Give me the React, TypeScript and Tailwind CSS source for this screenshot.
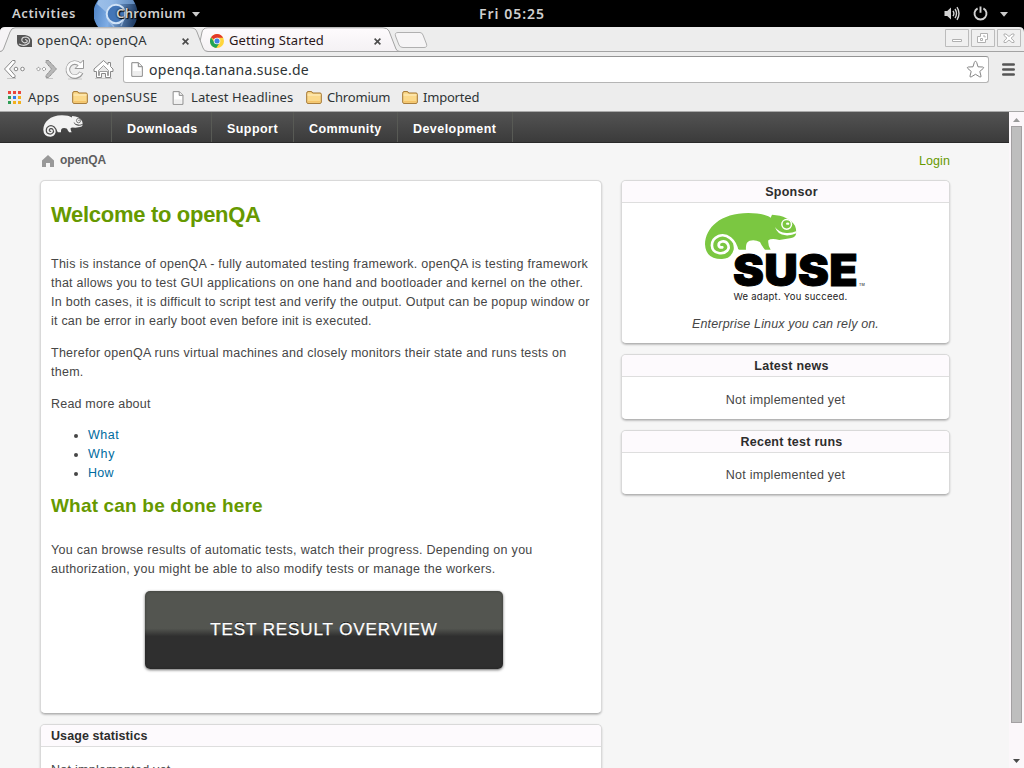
import type { ReactNode } from "react";

const UI = "font-['Noto_Sans','Open_Sans',sans-serif]";

function Chameleon({ className, body, cut, viewBox }: { className: string; body: string; cut: string; viewBox: string }) {
  return (
    <svg className={className} viewBox={viewBox} preserveAspectRatio="none">
      <path
        fill={body}
        d="M45 118 C46 68 92 24 175 24 C207 24 229 30 242 38 L246 29 C280 31 304 43 315 62 Q320 74 318 88 Q315 98 300 100 L268 105 Q244 99 235 106 Q233 120 242 134 L225 134 Q214 121 210 111 Q195 103 179 107 Q166 111 168 134 L147 134 Q136 128 126 108 Q133 120 131 134 Q124 161 96 162 Q47 163 45 118Z"
      />
      <path
        fill="none"
        stroke={cut}
        strokeWidth="8"
        strokeLinecap="round"
        d="M142 139 C136 104 110 84 86 93 C58 105 60 140 86 144 C108 148 122 131 113 117 C105 104 85 109 86 121 Q88 129 97 127"
      />
      <path fill={cut} d="M255 66 Q266 83 289 84 Q306 85 320 78 L319 85 Q305 92 287 91 Q262 89 255 66Z" />
      <circle cx="290" cy="58" r="14.5" fill="none" stroke={cut} strokeWidth="4.500" />
      <ellipse cx="293" cy="56" rx="5" ry="3.500" fill={cut} />
    </svg>
  );
}

function Chrome({ className }: { className: string }) {
  return (
    <svg className={className} viewBox="0 0 14 14">
      <circle cx="7" cy="7" r="7" fill="#ffd53c" />
      <path d="M7 7 1 3.4A7 7 0 0 1 13.1 3.7H7Z" fill="#e2372c" />
      <path d="M1 3.4A7 7 0 0 0 6.2 14L9.2 9.5 5 9Z" fill="#22a455" />
      <circle cx="7" cy="7" r="3.3" fill="#f4f4f4" />
      <circle cx="7" cy="7" r="2.5" fill="#3f82e4" />
    </svg>
  );
}

function Page({ className }: { className: string }) {
  return (
    <svg className={className} viewBox="0 0 12 15">
      <path d="M.8.7H7.5L11.3 4.5V14.3H.8Z" fill="#fff" stroke="#858585" />
      <path d="M7.3.8V4.7H11.2" fill="#eee" stroke="#858585" />
      <path d="M2 9H10V13H2Z" fill="#eee" />
    </svg>
  );
}

function Folder() {
  return (
    <svg className="mb-px h-[13px] w-4 shrink-0" viewBox="0 0 16 13">
      <path d="M.7 11V2.2Q.7.6 2 .6H5Q6.3.6 6.6 2H14Q15.3 2 15.3 3.2V11Q15.3 12.4 14 12.4H2Q.7 12.4.7 11Z" fill="#fbd98b" stroke="#a2742f" />
      <path d="M1.5 4H14.5" stroke="#fff0c5" />
      <path d="M1.6 10H14.4V11.5H1.6Z" fill="#f5c468" />
    </svg>
  );
}

function CloseX() {
  return (
    <svg className="mt-px h-[7px] w-[7px]" viewBox="0 0 7 7">
      <path d="M.6.6 6.4 6.4M6.4.6.6 6.4" stroke="#4c4c4c" strokeWidth="1.6" />
    </svg>
  );
}

function TopBar() {
  return (
    <div className={`relative flex h-[27px] items-center overflow-hidden bg-black font-semibold text-[#cfcfcf] ${UI}`}>
      <span className="ml-3 w-[82px] pt-px text-[13px] tracking-[0.6px]">Activities</span>
      <svg className="h-[27px] w-[44px]" viewBox="0 0 44 27">
        <defs>
          <linearGradient id="ball" x2="1" y2=".2">
            <stop stopColor="#477cc0" />
            <stop offset=".45" stopColor="#80aee5" />
            <stop offset="1" stopColor="#24426b" />
          </linearGradient>
          <linearGradient id="shine" x2="1">
            <stop stopColor="#b4d1f2" />
            <stop offset="1" stopColor="#6d9bd2" />
          </linearGradient>
        </defs>
        <circle cx="21.5" cy="13.5" r="22" fill="url(#ball)" />
        <path d="M22 4H41Q38-6 22-9Q6-7 3 4L12 12Q14 4 22 4Z" fill="url(#shine)" opacity=".75" />
        <circle cx="22" cy="14" r="9.3" fill="#4376b7" stroke="#d1e3f7" strokeWidth="2" />
        <path d="M14 20 20 27M31 16 27 26" stroke="#b0ccee" strokeWidth="1.5" opacity=".6" />
      </svg>
      <span className="-ml-[22px] w-[76px] pt-px text-[13px] tracking-[0.35px] [text-shadow:0_0_2px_#000,1px_1px_1px_#000]">Chromium</span>
      <svg className="mt-px h-[5px] w-2" viewBox="0 0 8 5"><path d="M0 0H8L4 4.800Z" fill="#ccc" /></svg>
      <span className="ml-[279px] pb-px text-[14px] tracking-[1px]">Fri 05:25</span>
      <svg className="ml-auto h-[15px] w-4" viewBox="0 0 16 15">
        <path d="M.5 5H3.2L7 1.4V13.6L3.2 10H.5Z" fill="#d2d2d2" />
        <path d="M9 4.8Q10.8 7.5 9 10.2M11 3Q14 7.5 11 12M13 1.2Q17 7.5 13 13.8" fill="none" stroke="#d2d2d2" strokeWidth="1.4" />
      </svg>
      <svg className="ml-[13px] h-[15px] w-[15px]" viewBox="0 0 15 15">
        <path d="M4.6 2.3A6 6 0 1 0 10.4 2.3M7.5.4V6.7" fill="none" stroke="#d2d2d2" strokeWidth="1.9" />
      </svg>
      <svg className="mt-px mr-4 ml-[12px] h-[5px] w-2" viewBox="0 0 8 5"><path d="M0 0H8L4 4.800Z" fill="#ccc" /></svg>
    </div>
  );
}

function TabStrip() {
  return (
    <div className={`relative h-[25px] bg-black text-[13px] text-[#2e3436] ${UI}`}>
      <svg className="absolute inset-0 h-[25px] w-[1024px]" viewBox="0 0 1024 25">
        <defs>
          <linearGradient id="tab2" x2="0" y2="1">
            <stop stopColor="#fefbfd" />
            <stop offset="1" stopColor="#f4f1f4" />
          </linearGradient>
        </defs>
        <path d="M0 25V5Q0 0 5 0H1019Q1024 0 1024 5V25Z" fill="#ededed" />
        <path d="M0 24.5H1024" stroke="#a3a3a3" />
        <path d="M0 24Q2 24 3 22L10 4Q11 .8 14 .8H5Q0 .8 0 5Z" fill="#f6f4f6" />
        <path d="M198 24.5 202 5Q203 .8 208 .8H383Q387.500 .8 389 4L396 22Q397 24.500 400 24.500Z" fill="url(#tab2)" stroke="#a3a3a3" />
        <path d="M0 24.500Q2.500 24.500 3.500 22L10 5Q11.500 .8 15 .8H191Q195.500 .8 197 5L203 21Q204 24.500 208 24.500V25H0Z" fill="#ededed" />
        <path d="M0 24.500Q2.500 24.500 3.500 22L10 5Q11.500 .8 15 .8H191Q195.500 .8 197 5L203 21Q204 24.500 208 24.500" fill="none" stroke="#a3a3a3" />
        <path d="M398 5.500H420Q422 5.500 423 8L426.500 17Q427.500 20.500 424 20.500H403Q400 20.500 399 18L395.500 9Q394.500 5.500 398 5.500Z" fill="#f6f5f6" stroke="#b0b0b0" />
      </svg>
      <div className="relative flex h-[27px] items-center">
        <svg className="ml-[17px] h-[14px] w-[15px]" viewBox="0 0 15 14">
          <path d="M0 1H8Q14 2 15 6V13H4Q0 12 0 8Z" fill="#555" />
          <path d="M2 10Q8 13 12 9Q14 4 9 3Q4 3 5 7Q7 10 10 8Q11 6 8 5.500" fill="none" stroke="#d8d8d8" strokeWidth="1.200" />
        </svg>
        <span className="ml-[5px] w-[145px] pt-px whitespace-nowrap tracking-[0.3px]">openQA: openQA</span>
        <CloseX />
        <Chrome className="ml-[21px] h-[14px] w-[14px]" />
        <span className="ml-[5px] w-[145px] pt-px whitespace-nowrap tracking-[0.1px] text-[#2a1719]">Getting Started</span>
        <CloseX />
        <div className="mr-[3px] mb-[5px] ml-auto flex gap-[2px]">
          {[
            <path key="a" d="M7.500 10.500H16.500V12.500H7.500Z" fill="#fff" stroke="#b0b0b0" />,
            <path key="b" d="M9.500 4.500H16.500V10.500H14.500V13.500H6.500V7.500H9.500ZM9.500 9.500H11.500V11.500H9.500ZM12 7H14V8.500" fill="#fff" stroke="#b0b0b0" />,
            <path key="c" d="M7 5H9L12 7.500 15 5H17V6.500L14 9.200 17 12V13.500H15L12 11 9 13.500H7V12L10 9.200 7 6.500Z" fill="#fff" stroke="#b0b0b0" />,
          ].map((icon, i) => (
            <svg key={i} className="h-[18px] w-6" viewBox="0 0 24 18">
              <path d="M.5.5H23.500V17.500H.5Z" fill="#f0f0f0" stroke="#bcbcbc" />
              {icon}
            </svg>
          ))}
        </div>
      </div>
    </div>
  );
}

function Toolbar() {
  return (
    <div className={`flex h-[34px] items-center bg-[#ededed] text-[#2e3436] ${UI}`}>
      <svg className="h-[34px] w-[123px] shrink-0" viewBox="0 0 123 34">
        <path d="M7 26.500H16M46 26.500H53M68 27H82M95 26.500H112" stroke="#c8c8c8" />
        <g fill="#fff" stroke="#888" strokeWidth="1">
          <path d="M12.500 8.500 4.500 17 12.500 25.500H15V23.500L9.500 17 15 10.500V8.500Z" />
          <circle cx="16" cy="17" r="1.800" />
          <circle cx="22.500" cy="17" r="1.800" />
          <path d="M48.500 8.500 56.500 17 48.500 25.500H46V23.500L51.500 17 46 10.500V8.500Z" fill="#b8b8b8" strokeDasharray="1.500 .5" />
          <circle cx="38.500" cy="17" r="1.600" strokeDasharray="1.500 .5" />
          <circle cx="44" cy="17" r="1.600" strokeDasharray="1.500 .5" />
          <path d="M103.500 8.500 94 17V19.500H96.500V25.500H101.500V21.500H105.500V25.500H110.500V19.500H113V17L110.500 14.500V10.500H108V12.500Z" />
        </g>
        <path d="M79.500 12.500A7 7 0 1 0 81.300 20.500" fill="none" stroke="#999" strokeWidth="4.500" />
        <path d="M83.500 8V16.500H75Z" fill="#fff" stroke="#999" />
        <path d="M80 12.800A7 7 0 1 0 80.900 20.800" fill="none" stroke="#fafafa" strokeWidth="2.800" />
        <path d="M98.500 18.500 103.500 13.500 108.500 18.500V23.500H107.500V19.500H99.500V23.500H98.500Z" fill="#e7e7e7" stroke="#888" strokeWidth=".8" />
      </svg>
      <div className="flex h-[27px] w-[866px] items-center rounded-[3px] border border-[#b5b5b5] border-t-[#939393] bg-white">
        <Page className="ml-[7px] h-[15px] w-3" />
        <span className="ml-[6px] text-[14px] tracking-[0.3px]">openqa.tanana.suse.de</span>
        <svg className="mr-[3px] ml-auto h-[19px] w-[19px]" viewBox="0 0 19 19">
          <path d="M9.500 1.300Q10.300 1.300 10.700 2.500L12 6.800 16.700 7Q18.400 7.300 17.200 8.500L13.800 11.400 15 16Q15.200 17.500 13.800 16.900L9.500 14.300 5.200 16.900Q3.800 17.500 4 16L5.200 11.400 1.800 8.500Q.6 7.300 2.300 7L7 6.800 8.300 2.500Q8.700 1.300 9.500 1.300Z" fill="#fff" stroke="#858585" />
        </svg>
      </div>
      <svg className="ml-[13px] h-[13px] w-[13px]" viewBox="0 0 13 13">
        <path d="M1.300 1.500H11.700M1.300 6.500H11.700M1.300 11.500H11.700" stroke="#555" strokeWidth="2.600" strokeLinecap="round" />
      </svg>
    </div>
  );
}

function Bookmarks() {
  const colors = ["#e9453a", "#e9453a", "#e9453a", "#2f9e55", "#2f7de9", "#f2b01e", "#2f9e55", "#f2b01e", "#f2b01e"];
  return (
    <div className={`flex h-[26px] items-center border-b border-[#a9a9a9] bg-[#ededed] pb-px text-[13px] whitespace-nowrap text-[#2e3436] ${UI}`}>
      <svg className="mb-[2px] ml-2 h-[13px] w-[13px]" viewBox="0 0 13 13">
        {colors.map((c, i) => (
          <rect key={i} x={(i % 3) * 5} y={Math.floor(i / 3) * 5} width="3" height="3" fill={c} />
        ))}
      </svg>
      <span className="ml-[7px] w-[44px] tracking-[0.2px]">Apps</span>
      <Folder />
      <span className="ml-[5px] w-[79px] tracking-[0.3px]">openSUSE</span>
      <Page className="h-[14px] w-3" />
      <span className="ml-[7px] w-[115px] tracking-[0.08px]">Latest Headlines</span>
      <Folder />
      <span className="ml-[5px] w-[75px] tracking-[-0.2px]">Chromium</span>
      <Folder />
      <span className="ml-[5px] tracking-[-0.2px]">Imported</span>
    </div>
  );
}

function Card({ title, center, className = "", children }: { title?: string; center?: boolean; className?: string; children: ReactNode }) {
  return (
    <section className={`overflow-hidden rounded-[5px] border border-[#d9d9d9] border-b-[#b5b5b5] bg-white shadow-[0_1px_2px_rgba(0,0,0,0.22)] ${center ? "text-center" : ""} ${className}`}>
      {title && (
        <h3 className={`h-[22px] border-b border-[#dedede] bg-[#fdfafd] text-[12.5px] leading-[23px] font-bold text-[#2d2d2d] ${center ? "pl-3 tracking-[0.26px]" : "pl-[10px] tracking-[0.08px]"}`}>{title}</h3>
      )}
      {children}
    </section>
  );
}

function SiteNav() {
  return (
    <nav className="flex h-[31px] items-stretch border-b border-[#292929] bg-linear-to-b from-[#535353] to-[#3b3b3b] text-[12.5px] leading-[35px] font-bold tracking-[0.44px] text-white">
      <div className="w-[111px] pt-[3px] pl-[43px]">
        <Chameleon className="h-[22px] w-10" body="#f3f3f3" cut="#4c4c4c" viewBox="43 22 278 142" />
      </div>
      <a className="w-[100px] border-l border-[#585a55] pl-[15px]">Downloads</a>
      <a className="w-[82px] border-l border-[#585a55] pl-[15px]">Support</a>
      <a className="w-[104px] border-l border-[#585a55] pl-[15px]">Community</a>
      <a className="w-[116px] border-x border-[#585a55] pl-[15px]">Development</a>
    </nav>
  );
}

function Sponsor() {
  return (
    <Card title="Sponsor" center className="h-[164px]">
      <div className="relative mt-[2px] ml-[68px] h-[105px] w-[190px]">
        <Chameleon className="h-[105px] w-[190px]" body="#7bc741" cut="#fff" viewBox="0 0 570 315" />
        <svg className="absolute inset-0 h-[105px] w-[190px]" viewBox="0 0 190 105">
          <text x="43" y="81" textLength="125" lengthAdjust="spacingAndGlyphs" fontFamily="Inter" fontWeight="900" fontSize="44" stroke="#000" strokeWidth="1">SUSE</text>
          <text x="169" y="81" textLength="6" lengthAdjust="spacingAndGlyphs" fontFamily="Inter" fontSize="4">TM</text>
          <text x="43.500" y="94.500" textLength="114" lengthAdjust="spacingAndGlyphs" fontFamily="Inter" fontSize="9.500" fill="#222">We adapt. You succeed.</text>
        </svg>
      </div>
      <p className="mt-[5px] text-[12.5px] leading-[19px] tracking-[0.15px] italic">Enterprise Linux you can rely on.</p>
    </Card>
  );
}

function Website() {
  return (
    <div className="h-[656px] w-[1009px] overflow-hidden bg-[#f6f6f6] font-['Liberation_Sans',Arial,sans-serif] text-[12.5px] leading-[19px] tracking-[0.26px] text-[#464646]">
      <SiteNav />
      <div className="flex h-[37px] w-[950px] items-center pb-[2px] pl-[42px]">
        <svg className="h-3 w-3" viewBox="0 0 12 12"><path d="M6 0 12 5.500V12H8V8H4V12H0V5.500Z" fill="#999" /></svg>
        <span className="ml-[6px] text-[12px] font-bold tracking-[-0.1px] text-[#5e5e5e]">openQA</span>
        <a className="mt-[2px] ml-auto tracking-[0.1px] text-[#669900]">Login</a>
      </div>
      <div className="flex items-start gap-[19px] pl-10">
        <main className="flex w-[562px] flex-col gap-[10px] whitespace-nowrap">
          <Card className="h-[534px] px-[10px]">
            <h1 className="mt-[20px] text-[22px] leading-[28px] font-bold tracking-[-0.3px] text-[#669900]">Welcome to openQA</h1>
            <p className="mt-[26px]">
              This is instance of openQA - fully automated testing framework. openQA is testing framework<br />
              <span className="tracking-[0.24px]">that allows you to test GUI applications on one hand and bootloader and kernel on the other.</span><br />
              In both cases, it is difficult to script test and verify the output. Output can be popup window or<br />
              <span className="tracking-[0.22px]">it can be error in early boot even before init is executed.</span>
            </p>
            <p className="mt-[13px]">Therefor openQA runs virtual machines and closely monitors their state and runs tests on<br />them.</p>
            <p className="mt-[13px] tracking-[0.2px]">Read more about</p>
            <ul className="mt-[12px] list-disc pl-[37px]">
              <li><a className="tracking-[0.5px] text-[#006ba0]">What</a></li>
              <li><a className="tracking-[0.7px] text-[#006ba0]">Why</a></li>
              <li><a className="text-[#006ba0]">How</a></li>
            </ul>
            <h2 className="mt-[10px] text-[19px] leading-[26px] font-bold tracking-[0.18px] text-[#669900]">What can be done here</h2>
            <p className="mt-[22px] tracking-[0.29px]">You can browse results of automatic tests, watch their progress. Depending on you<br />authorization, you might be able to also modify tests or manage the workers.</p>
            <a className="mt-[12px] ml-[94px] flex h-[78px] w-[358px] items-center justify-center rounded-[5px] bg-[linear-gradient(to_bottom,#535550_0%,#535550_48%,#2f2f2f_58%,#2f2f2f_100%)] pb-[2px] text-[17px] tracking-[0.9px] text-white shadow-[0_1px_3px_rgba(0,0,0,0.6),inset_0_0_3px_rgba(0,0,0,0.3)] [-webkit-text-stroke:0.3px_#fff] [text-shadow:0_-1px_0_#000]">TEST RESULT OVERVIEW</a>
          </Card>
          <Card title="Usage statistics" className="h-[90px]">
            <p className="mt-[14px] ml-[10px]">Not implemented yet</p>
          </Card>
        </main>
        <aside className="flex w-[329px] flex-col gap-[10px]">
          <Sponsor />
          <Card title="Latest news" center className="h-[66px]"><p className="mt-[14px]">Not implemented yet</p></Card>
          <Card title="Recent test runs" center className="h-[65px]"><p className="mt-[13px]">Not implemented yet</p></Card>
        </aside>
      </div>
    </div>
  );
}

export default function App() {
  return (
    <div className="h-[768px] w-[1024px] overflow-hidden bg-[#ededed]">
      <TopBar />
      <TabStrip />
      <Toolbar />
      <Bookmarks />
      <div className="flex">
        <Website />
        <div className="flex h-[656px] w-[15px] flex-col items-center bg-[#fbf7fa]">
          <svg className="mt-[6px] h-[4px] w-[7px]" viewBox="0 0 7 4"><path d="M3.500 0 7 4H0Z" fill="#999" /></svg>
          <div className="mt-[4px] h-[597px] w-[11px] border border-[#a3a0a2] bg-[#bebebe]" />
          <svg className="mt-[36px] h-[4px] w-[7px]" viewBox="0 0 7 4"><path d="M0 0H7L3.500 4Z" fill="#4a4a4a" /></svg>
        </div>
      </div>
    </div>
  );
}
